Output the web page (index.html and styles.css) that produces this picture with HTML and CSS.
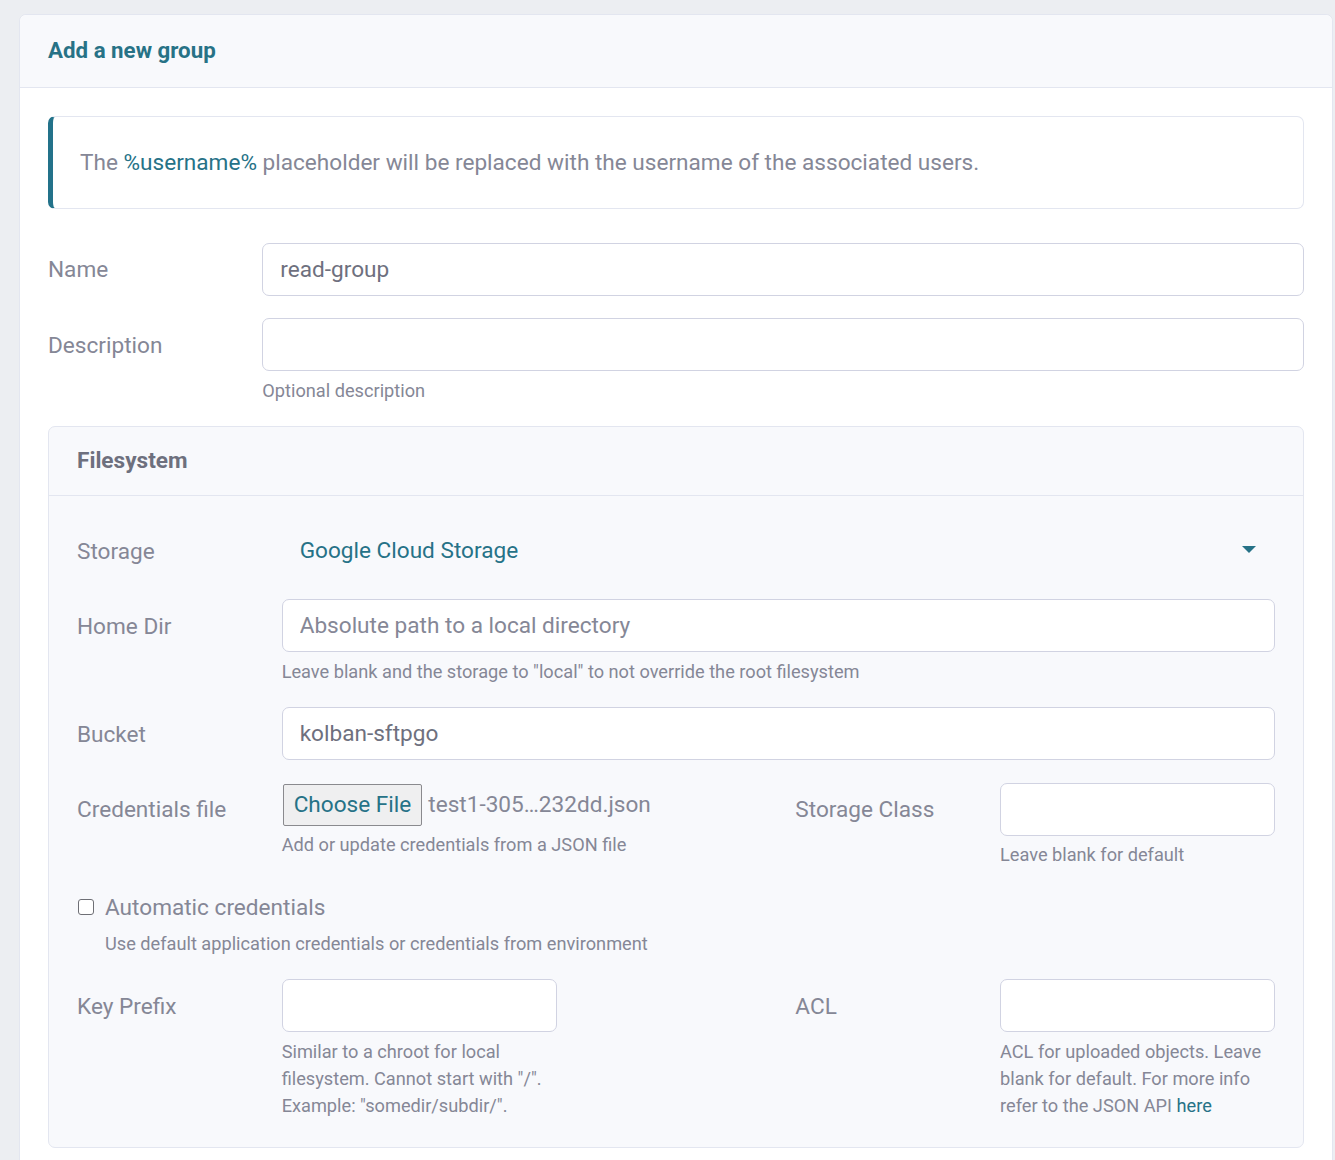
FILE: index.html
```html
<!DOCTYPE html>
<html lang="en">
<head>
<meta charset="utf-8">
<title>Add a new group</title>
<link rel="stylesheet" href="styles.css">
</head>
<body>
<div class="page">
  <div class="card">
    <div class="card-header">
      <h6 class="card-title">Add a new group</h6>
    </div>
    <div class="card-body">
      <div class="callout">
        The <span class="accent">%username%</span> placeholder will be replaced with the username of the associated users.
      </div>

      <div class="form-row">
        <label class="col-label span-2">Name</label>
        <div class="span-10">
          <input class="form-control" type="text" value="read-group">
        </div>
      </div>

      <div class="form-row">
        <label class="col-label span-2">Description</label>
        <div class="span-10">
          <input class="form-control" type="text" value="">
          <small class="help">Optional description</small>
        </div>
      </div>

      <div class="card inner-card">
        <div class="inner-header">Filesystem</div>
        <div class="inner-body">
          <div class="form-row">
            <label class="col-label span-2">Storage</label>
            <div class="span-10">
              <div class="select">
                <span>Google Cloud Storage</span>
                <svg class="caret" width="14" height="7" viewBox="0 0 14 7"><path d="M0 0H14L7 7Z" fill="currentColor"/></svg>
              </div>
            </div>
          </div>

          <div class="form-row">
            <label class="col-label span-2">Home Dir</label>
            <div class="span-10">
              <input class="form-control" type="text" placeholder="Absolute path to a local directory">
              <small class="help">Leave blank and the storage to "local" to not override the root filesystem</small>
            </div>
          </div>

          <div class="form-row">
            <label class="col-label span-2">Bucket</label>
            <div class="span-10">
              <input class="form-control" type="text" value="kolban-sftpgo">
            </div>
          </div>

          <div class="form-row">
            <label class="col-label span-2">Credentials file</label>
            <div class="span-4">
              <div class="file-input">
                <span class="file-btn">Choose File</span>
                <span class="file-name">test1-305…232dd.json</span>
              </div>
              <small class="help">Add or update credentials from a JSON file</small>
            </div>
            <div class="span-1"></div>
            <label class="col-label span-2 shift">Storage Class</label>
            <div class="span-3 shift">
              <input class="form-control" type="text" value="">
              <small class="help">Leave blank for default</small>
            </div>
          </div>

          <div class="form-check">
            <input class="check" type="checkbox" id="auto-cred">
            <label class="check-label" for="auto-cred">Automatic credentials</label>
            <small class="help">Use default application credentials or credentials from environment</small>
          </div>

          <div class="form-row last">
            <label class="col-label span-2">Key Prefix</label>
            <div class="span-3">
              <input class="form-control narrow" type="text" value="">
              <small class="help">Similar to a chroot for local filesystem. Cannot start with "/". Example: "somedir/subdir/".</small>
            </div>
            <div class="span-2"></div>
            <label class="col-label span-2 shift">ACL</label>
            <div class="span-3 shift">
              <input class="form-control" type="text" value="">
              <small class="help">ACL for uploaded objects. Leave blank for default. For more info refer to the JSON API <a class="link" href="#">here</a></small>
            </div>
          </div>
        </div>
      </div>
    </div>
  </div>
</div>
</body>
</html>
```

FILE: styles.css
```css
* { box-sizing: border-box; }

html, body {
  margin: 0;
  padding: 0;
}

body {
  background: #eceef2;
  font-family: Roboto, "Liberation Sans", Arial, sans-serif;
  font-size: 22.6px;
  line-height: 33.6px;
  color: #858796;
  overflow: hidden;
}

.page {
  padding: 14px 2px 0 19px;
}

.card {
  background: #fff;
  border: 1px solid #e3e6f0;
  border-radius: 7px;
}

.card-header {
  background: #f8f9fc;
  border-bottom: 1px solid #e3e6f0;
  padding: 22.4px 28px;
  border-radius: 7px 7px 0 0;
}

.card-title {
  margin: 0;
  font-size: 22.3px;
  line-height: 27px;
  font-weight: 700;
  color: #277286;
}

.card-body {
  padding: 28px 28px 40px;
}

.callout {
  border: 1px solid #e3e6f0;
  border-left: 5px solid #23728a;
  border-radius: 7px;
  padding: 28.8px 27px;
  margin-bottom: 33.6px;
  color: #858796;
}

.accent { color: #267287; }

.form-row {
  display: grid;
  grid-template-columns: repeat(12, 1fr);
  column-gap: 30px;
  margin-bottom: 22.4px;
}

.form-row.last { margin-bottom: 0; }

.span-1 { grid-column: span 1; }
.span-2 { grid-column: span 2; }
.span-3 { grid-column: span 3; }
.span-4 { grid-column: span 4; }
.span-10 { grid-column: span 10; }

.shift { margin-left: 2px; }

.col-label {
  padding-top: 10.8px;
  padding-bottom: 8.6px;
  line-height: 33.6px;
  color: #858796;
}

.form-control {
  display: block;
  width: 100%;
  height: 53px;
  padding: 8.4px 17px;
  font-family: inherit;
  font-size: 22.6px;
  line-height: 33.6px;
  color: #6e707e;
  background: #fff;
  border: 1px solid #d1d3e2;
  border-radius: 7px;
  outline: none;
}

.form-control.narrow { width: calc(100% - 2px); }

.form-control::placeholder {
  color: #858796;
  opacity: 1;
}

.help {
  display: block;
  margin-top: 5.6px;
  font-size: 18.2px;
  line-height: 27px;
  color: #858796;
}

.inner-card {
  background: #f8f9fc;
}

.inner-header {
  padding: 17.2px 28px;
  border-bottom: 1px solid #e3e6f0;
  font-weight: 700;
  color: #6e707e;
  line-height: 33.6px;
}

.inner-body {
  padding: 28px;
}

.select {
  height: 53px;
  padding: 9.4px 19px 9.4px 18px;
  display: flex;
  align-items: center;
  justify-content: space-between;
  color: #267287;
  line-height: 33.6px;
}

.caret {
  display: block;
  color: #267287;
  margin-top: -2px;
}

.file-input {
  display: flex;
  align-items: center;
  gap: 6px;
  height: 42px;
  margin-top: 1px;
}

.file-btn {
  display: inline-block;
  height: 42px;
  margin-left: 1px;
  padding: 4px 10px 0 10px;
  background: #efeff0;
  border: 1px solid #8a8a8e;
  border-radius: 2px;
  color: #267287;
  line-height: 31px;
}

.file-name {
  color: #858796;
}

.form-check {
  position: relative;
  padding-left: 28px;
  margin-bottom: 22.4px;
}

.check {
  position: absolute;
  left: 1px;
  top: 8px;
  margin: 0;
  width: 16px;
  height: 16px;
  appearance: none;
  -webkit-appearance: none;
  border: 1.5px solid #6e6f75;
  border-radius: 3px;
  background: #fff;
}

.check-label {
  line-height: 33.6px;
  color: #858796;
}

.link {
  color: #267287;
  text-decoration: none;
}
```
